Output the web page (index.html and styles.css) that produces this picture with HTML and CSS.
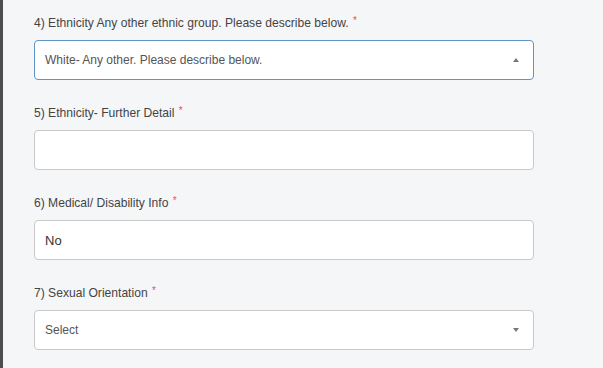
FILE: index.html
```html
<!DOCTYPE html>
<html lang="en">
<head>
	<meta charset="UTF-8">
	<title>Ethnicity form</title>
	<link rel="stylesheet" href="styles.css">
</head>
<body>

<div class="page">
	<div class="behind"></div>
	<div class="panel">
		<div class="field">
			<label>4) Ethnicity Any other ethnic group. Please describe below. <sup>*</sup></label>
			<div class="box box_open">
				<span class="val">White- Any other. Please describe below.</span>
				<i class="arr arr_up"></i>
			</div>
		</div>
		<div class="field">
			<label>5) Ethnicity- Further Detail <sup>*</sup></label>
			<div class="box"></div>
		</div>
		<div class="field">
			<label>6) Medical/ Disability Info <sup>*</sup></label>
			<div class="box">
				<span class="val val_dark">No</span>
			</div>
		</div>
		<div class="field">
			<label>7) Sexual Orientation <sup>*</sup></label>
			<div class="box">
				<span class="val">Select</span>
				<i class="arr"></i>
			</div>
		</div>
	</div>
</div>

</body>
</html>
```

FILE: styles.css
```css
*{margin:0; padding:0; box-sizing:border-box;}
body{ background:#f5f6f8; font-family:"Liberation Sans", Arial, sans-serif; overflow:hidden;}
.page{ display:flex; height:368px;}

/*page behind the modal*/
.behind{ width:3px; background:#4d4d4d;}

/*form*/
.panel{ flex:1; padding:16px 0 0 31px;}
.field{ width:500px; margin-bottom:26px;}
.field label{ display:block; font-size:12.1px; line-height:14px; color:#444; margin-bottom:10px;}
.field sup{ color:#e8505b; font-size:10px; vertical-align:3px; line-height:0; margin-left:1px;}

.box{ display:flex; align-items:center; height:40px; background:#fff; border:1px solid #c9c9c9; border-radius:4px; padding:0 14px 0 10px;}
.box_open{ border-color:#5c95c6;}
.val{ flex:1; font-size:12px; color:#555;}
.val_dark{ font-size:13px; color:#333;}

/*select arrows*/
.arr{ width:0; height:0; border-left:3px solid transparent; border-right:3px solid transparent; border-top:4px solid #777;}
.arr_up{ border-top:0; border-bottom:4px solid #777;}
```
